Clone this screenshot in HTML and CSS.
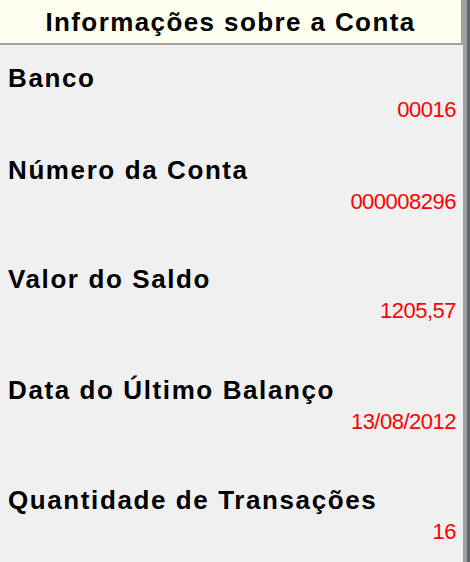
FILE: index.html
```html
<!DOCTYPE html>
<html lang="pt-BR">
<head>
<meta charset="utf-8">
<title>Informações sobre a Conta</title>
<link rel="stylesheet" href="styles.css">
</head>
<body>
<div class="window">
  <div class="panel">
    <div class="header">Informações sobre a Conta</div>
    <div class="list">
      <div class="item">
        <div class="label">Banco</div>
        <div class="value">00016</div>
      </div>
      <div class="item item--gap-a">
        <div class="label">Número da Conta</div>
        <div class="value">000008296</div>
      </div>
      <div class="item item--gap-b">
        <div class="label">Valor do Saldo</div>
        <div class="value">1205,57</div>
      </div>
      <div class="item item--gap-c">
        <div class="label">Data do Último Balanço</div>
        <div class="value">13/08/2012</div>
      </div>
      <div class="item item--gap-d">
        <div class="label">Quantidade de Transações</div>
        <div class="value">16</div>
      </div>
    </div>
  </div>
  <div class="edge"></div>
  <div class="frame"></div>
</div>
</body>
</html>
```
FILE: styles.css
```css
html, body {
  margin: 0;
  padding: 0;
}

body {
  width: 470px;
  height: 562px;
  overflow: hidden;
  background: #f0f0f0;
  font-family: "Liberation Sans", Arial, sans-serif;
}

.window {
  display: flex;
  height: 562px;
}

.panel {
  flex: 1;
  display: flex;
  flex-direction: column;
  background: #f0f0f0;
}

.edge {
  width: 4px;
  background: #a0a0a0;
}

.frame {
  width: 3px;
  background: #586878;
}

.header {
  height: 42px;
  padding-top: 1px;
  line-height: 42px;
  background: #fffff0;
  border-right: 2px solid #a0a0a0;
  border-bottom: 2px solid #a0a0a0;
  text-align: center;
  font-size: 26px;
  font-weight: bold;
  letter-spacing: 1.4px;
  color: #000;
}

.list {
  display: flex;
  flex-direction: column;
  padding: 18px 7px 0 8px;
}

.label {
  font-size: 26px;
  font-weight: bold;
  letter-spacing: 1.6px;
  line-height: 30px;
  color: #000;
  white-space: nowrap;
}

.value {
  font-size: 22px;
  letter-spacing: -0.5px;
  line-height: 34px;
  text-align: right;
  color: #ff0000;
}

.item--gap-a { margin-top: 28px; }
.item--gap-b { margin-top: 45px; }
.item--gap-c { margin-top: 47px; }
.item--gap-d { margin-top: 46px; }
```
